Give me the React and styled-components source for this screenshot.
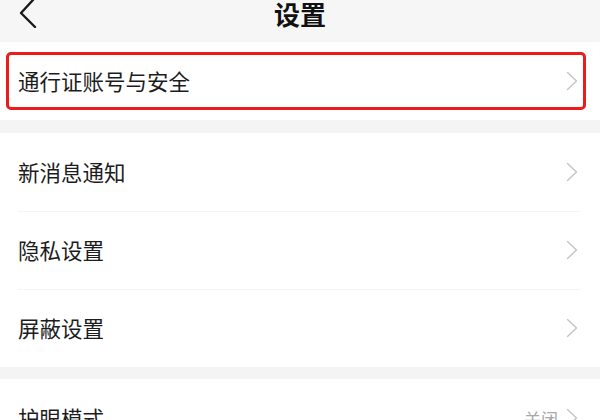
import React from "react";
import styled, { createGlobalStyle } from "styled-components";

const GlobalStyle = createGlobalStyle`
  html, body {
    margin: 0;
    padding: 0;
    background: #f4f4f4;
    overflow: hidden;
  }
  body {
    font-family: "Noto Sans CJK SC", "Noto Sans", sans-serif;
    color: #1c1c1c;
  }
`;

const Page = styled.div`
  width: 600px;
  height: 420px;
  display: flex;
  flex-direction: column;
  background: #f4f4f4;
  overflow: hidden;
`;

const Header = styled.div`
  flex: none;
  height: 42px;
  box-sizing: border-box;
  padding: 0 0 24px;
  display: grid;
  grid-template-columns: 60px 1fr 60px;
  align-items: center;
  background: #f6f6f6;
`;

const BackButton = styled.div`
  display: flex;
  align-items: center;
  padding-left: 18px;
`;

const Title = styled.h1`
  margin: 0;
  text-align: center;
  font-size: 26px;
  font-weight: 700;
  line-height: 1;
  color: #111;
`;

const Section = styled.div`
  flex: none;
  background: #fff;
  display: flex;
  flex-direction: column;
  margin-bottom: ${(p) => p.$gap || 0}px;
`;

const Row = styled.div`
  position: relative;
  height: 78px;
  display: flex;
  align-items: center;
  padding: 0 22px 0 18px;
  box-sizing: border-box;
  & + &::before {
    content: "";
    position: absolute;
    top: 0;
    left: 18px;
    right: 20px;
    height: 1px;
    background: #f4f4f4;
  }
`;

const Highlight = styled.div`
  position: absolute;
  left: 6px;
  right: 14px;
  top: 10px;
  bottom: 10px;
  border: 3.5px solid #ec1c1c;
  border-radius: 5px;
  pointer-events: none;
`;

const Label = styled.span`
  flex: 1;
  font-size: 21.5px;
  line-height: 1;
  color: #1c1c1c;
`;

const Value = styled.span`
  font-size: 17px;
  color: #a8a8a8;
  margin-right: 8px;
`;

const Chevron = () => (
  <svg width="12" height="20" viewBox="0 0 12 20" fill="none">
    <path d="M1.5 1.5 L10.5 10 L1.5 18.5" stroke="#c4c4c4" strokeWidth="1.4" strokeLinecap="round" strokeLinejoin="round" />
  </svg>
);

const BackIcon = () => (
  <svg width="20" height="28" viewBox="0 0 20 28" fill="none">
    <path d="M15 0 L3 13 L17 27" stroke="#1a1a1a" strokeWidth="2.4" strokeLinecap="round" strokeLinejoin="round" />
  </svg>
);

const SettingRow = ({ label, value, highlighted }) => (
  <Row>
    {highlighted && <Highlight />}
    <Label>{label}</Label>
    {value && <Value>{value}</Value>}
    <Chevron />
  </Row>
);

export default function App() {
  return (
    <Page>
      <GlobalStyle />
      <Header>
        <BackButton>
          <BackIcon />
        </BackButton>
        <Title>设置</Title>
        <div />
      </Header>
      <Section $gap={13}>
        <SettingRow label="通行证账号与安全" highlighted />
      </Section>
      <Section $gap={12}>
        <SettingRow label="新消息通知" />
        <SettingRow label="隐私设置" />
        <SettingRow label="屏蔽设置" />
      </Section>
      <Section>
        <SettingRow label="护眼模式" value="关闭" />
      </Section>
    </Page>
  );
}
